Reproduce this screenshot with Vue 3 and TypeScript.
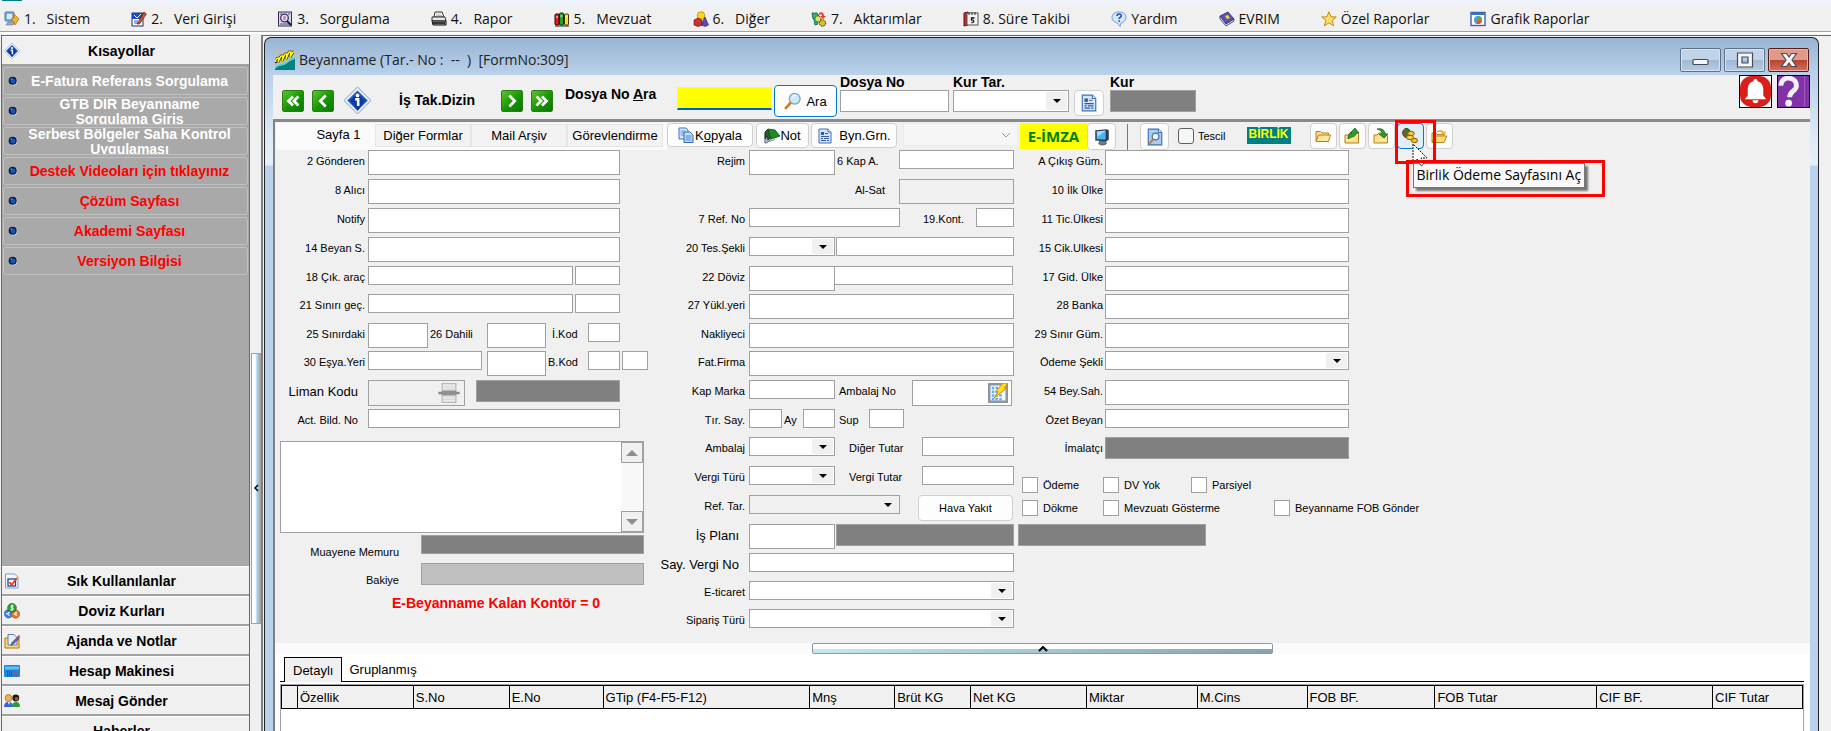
<script setup lang="ts">
import { ref } from 'vue'

interface Cell {
  kind: 'input' | 'select' | 'text' | 'filled' | 'button' | 'lookup' | 'stamp'
  w: number
  gap?: number
  tall?: boolean
  off?: boolean
  text?: string
  name?: string
}
interface Row {
  id: string
  label: string
  large?: boolean
  inset?: boolean
  short?: boolean
  cells: Cell[]
}

const icons: Record<string, string> = {
  system: '<rect x="1" y="1" width="9" height="9" rx="1" fill="#7fb2e6" stroke="#4b76a8"/><rect x="3" y="3" width="5" height="5" fill="#d8ecff"/><path d="M2 14h7l2-3H4z" fill="#9fb0c6" stroke="#5d6f88" stroke-width=".6"/><path d="M10 3l5 5-4 6-1-3-3-3 3-1z" fill="#f6b12c" stroke="#a86a08" stroke-width=".7"/>',
  entry: '<rect x="1" y="2" width="11" height="13" fill="#fff" stroke="#1d2b6b"/><path d="M1 2h11v6H1z" fill="#1f49b6"/><path d="M3 4l3 3 4-4" stroke="#fff" fill="none"/><path d="M3 10h4M3 12h6" stroke="#3b60c8"/><path d="M6 13l7-12 2.500 2-7 10z" fill="#d2502c" stroke="#40160c" stroke-width=".6"/>',
  query: '<rect x="1.500" y="1" width="13" height="14" fill="#d5d5e8" stroke="#30304f"/><path d="M3 13h10M3 3h2M11 3h2" stroke="#505070"/><circle cx="7.500" cy="7" r="3.800" fill="#f3dcf5" stroke="#3f2d68" stroke-width="1.300"/><path d="M6 6h3M6 8h3" stroke="#7d5ba0"/><path d="M10 10l4 4" stroke="#201838" stroke-width="2"/>',
  printer: '<path d="M4 1h7l2 5H3z" fill="#fff" stroke="#333"/><path d="M1 6h13l1 4H1z" fill="#e8e8e8" stroke="#333"/><path d="M1 10h14v4H2z" fill="#a7a7a7" stroke="#111"/><path d="M2 12h12" stroke="#111" stroke-width="1.500"/><path d="M5 3h5M5 4.500h6" stroke="#999" stroke-width=".6"/>',
  books: '<rect x="1" y="3" width="4" height="11" rx="1" fill="#e81e1e" stroke="#300"/><rect x="5.500" y="2" width="4" height="12" rx="1" fill="#17a335" stroke="#031"/><rect x="10.500" y="3" width="4" height="11" rx="1" fill="#ffd928" stroke="#430"/><path d="M2 6h2M6.500 5h2M11.500 6h2" stroke="#fff"/><path d="M1 15h14" stroke="#222"/>',
  shapes: '<circle cx="8" cy="4.500" r="3.800" fill="#ffd51c" stroke="#9a7400" stroke-width=".6"/><path d="M1 9l4-2 4 2v5l-4 1.500L1 14z" fill="#cf3030" stroke="#5d0b0b" stroke-width=".6"/><path d="M12 6l3.500 8-3 1.500L8 14z" fill="#5c4bb8" stroke="#221866" stroke-width=".6"/>',
  transfer: '<path d="M1 2h5l2 3-3 3H2z" fill="#2eb082" stroke="#0b4a33" stroke-width=".7"/><path d="M8 2c3-2 5 0 5 3h2l-3 3-3-3h2c0-2-1-2-3-1z" fill="#ef3d22"/><circle cx="7" cy="8" r="3" fill="#efe24e" stroke="#333" stroke-dasharray="1.500 1"/><circle cx="11.500" cy="12" r="3.200" fill="#d5c12c" stroke="#222" stroke-dasharray="1.500 1"/><path d="M3 8l1 6 3-1-1-3" stroke="#1b7d48" fill="#2eb082"/>',
  calendar: '<path d="M1 2l4-1v13l-4 1z" fill="#c62d2d" stroke="#5a1111"/><rect x="4" y="2" width="11" height="12" fill="#f3f3f3" stroke="#555"/><path d="M6 1v3M9 1v3M12 1v3" stroke="#333"/><path d="M11.500 7H8.500v2c3-.5 3 3 0 2.500" fill="none" stroke="#111" stroke-width="1.300"/>',
  help: '<path d="M8 1c4 0 7 2 7 5.500 0 3-2.500 5-5 5.500L9 15.500 6.500 12C3.500 11.500 1 9.500 1 6.500 1 3 4 1 8 1z" fill="#d5e6fb" stroke="#7d9cc4"/><path d="M6 5c0-3 4.500-2.500 4.300 0-.2 1.500-2.100 1.500-2.100 3M8.200 9.200v1.500" fill="none" stroke="#1b4db0" stroke-width="1.600"/>',
  book: '<path d="M1 5l8-4 6 7-8 5z" fill="#5a52b5" stroke="#26215f" stroke-width=".8"/><path d="M1 5v3l6 7 8-5V8l-8 5z" fill="#e9e9f5" stroke="#26215f" stroke-width=".8"/><path d="M6 5l3-1 2 3-3 1z" fill="#ffd23c"/>',
  star: '<path d="M8 .8l2 5 5.300.2-4.200 3.400 1.500 5.400L8 11.800l-4.600 3 1.500-5.400L.7 6 6 5.800z" fill="#ffe065" stroke="#c08a10"/>',
  chart: '<rect x="1" y="1.500" width="14" height="13" fill="#fff" stroke="#3b62ad" stroke-width="1.400"/><path d="M1 2h14v2H1z" fill="#3f71c9"/><circle cx="8" cy="9" r="4" fill="#4f9be0"/><path d="M8 9V5a4 4 0 0 1 4 4z" fill="#59b042"/><path d="M8 9h4a4 4 0 0 1-6 3.400z" fill="#ea5424"/>',
  info: '<path d="M8 0l8 8-8 8-8-8z" fill="#e7eefb" stroke="#9eb1d6" stroke-width=".6"/><path d="M8 2l6 6-6 6-6-6z" fill="#1a55c8"/><path d="M8 4l4.500 4L8 14 3.500 8z" fill="#0b3aa0"/><circle cx="8" cy="5" r="1.100" fill="#fff"/><path d="M6.600 7.300h1.800v4" fill="none" stroke="#fff" stroke-width="1.500"/>',
  orb: '<circle cx="8.500" cy="8.500" r="6.500" fill="#e4e4d8"/><circle cx="7.500" cy="7.500" r="6.500" fill="#0b1d4f"/><circle cx="8" cy="8" r="4" fill="#1256bd"/><circle cx="5.500" cy="5" r="1.500" fill="#5f87c9"/>',
  check: '<path d="M1.500 1h9l3.500 3v11h-12.500z" fill="#f4f9ff" stroke="#7a9cc9"/><rect x="4" y="6" width="7.500" height="7" fill="#fff" stroke="#1746a3" stroke-width="1.300"/><path d="M5.500 9l2 3L13 5" fill="none" stroke="#f03a1e" stroke-width="1.900"/>',
  money: '<circle cx="4.500" cy="10.800" r="4.200" fill="#3a84dc" stroke="#1c5cab" stroke-width=".6"/><circle cx="11.500" cy="11" r="4.200" fill="#e9782d" stroke="#a84b10" stroke-width=".6"/><circle cx="8" cy="4.800" r="4.400" fill="#2c9d33" stroke="#14611a" stroke-width=".6"/><path d="M9.800 3C7 1.800 6 4.500 8 4.800c2.500.3 1.500 3-1.700 1.900M8 1.600v6.300M6 9.500c-3-1-3 3.500 0 2.500M2 10.800h3M13 9.500c-3-1-3 3 0 3M10 11h3" fill="none" stroke="#fff" stroke-width="1"/>',
  agenda: '<path d="M1 5h4l1 1h9v9H1z" fill="#ffd975" stroke="#a97712"/><path d="M4 1.500h6l3 3V12H4z" fill="#e6f0fc" stroke="#5d7fb0"/><path d="M7 12.500l1-3 6-6 1.500 1.500-6 6z" fill="#5d6ca8" stroke="#2f3868" stroke-width=".6"/><path d="M13.500 3.500L15 2l1 1-1 2z" fill="#e23a1d"/>',
  calc: '<rect x="0" y="2" width="16" height="12" rx="1" fill="#1d86db"/><path d="M1 3.500h14v3H1z" fill="#64bdf5"/><path d="M3 9h6M3 11h6M3 12.800h6" stroke="#0a3d78" stroke-dasharray="1 1"/><path d="M10 9h4M10 11h4M10 12.800h4" stroke="#c43a4a" stroke-dasharray="1 1"/>',
  users: '<circle cx="4.500" cy="5" r="3.400" fill="#f2ad57" stroke="#a06619" stroke-width=".7"/><circle cx="11.800" cy="5" r="3.400" fill="#26140e"/><circle cx="12.500" cy="5.800" r="1.900" fill="#a35a2d"/><path d="M0 14c0-7 9-7 9 0z" fill="#3462dc"/><path d="M8 12.500c1-5 8-4.500 8 .5l-.5 1H9z" fill="#2c9a38"/><path d="M4 9l1 3 1-3z" fill="#fff"/>',
  magnifier: '<circle cx="9.500" cy="6" r="4.800" fill="#cbe8fb" stroke="#8ba4bb" stroke-width="1.200"/><path d="M7 5c1-2 3-2 4-1.500" stroke="#fff" fill="none"/><path d="M6 9.500l-5 5.500" stroke="#d9751d" stroke-width="2.400"/>',
  doc: '<path d="M2 1h9l3 3v11H2z" fill="#d4e6fa" stroke="#3f6fb4"/><path d="M11 1v3h3" fill="#fff" stroke="#3f6fb4"/><rect x="4" y="4" width="3" height="3" fill="#35589b"/><path d="M8 5.500h3M4 8.500h8M4 10.500h2M7 10.500h5M4 12.500h5M10 12.500h2" stroke="#35589b"/>',
  copy: '<path d="M1 1h7l2 2v9H1z" fill="#dbeafb" stroke="#3a71bd"/><path d="M2.500 4h5M2.500 6h5M2.500 8h5" stroke="#5d90d4"/><path d="M6 5h6l3 3v7.500H6z" fill="#c5defa" stroke="#2f66b5"/><path d="M7.500 9h6M7.500 11h6M7.500 13h6" stroke="#4f86d0"/>',
  note: '<path d="M1 5l3-3 3 9-4 4H.8z" fill="#9db3c9" stroke="#4d637b" stroke-width=".7"/><path d="M1 4l3-3 3 8-3 3-1-4-2 3z" fill="#2f5633" stroke="#0b3010" stroke-width=".8"/><path d="M4 1l7 1 5 6-9 3z" fill="#1a8f26" stroke="#064b10" stroke-width=".8"/><path d="M5 13.500l6-2" stroke="#77859a"/>',
  monitor: '<path d="M2 2l10-1 2 1v8l-2 2-10-1z" fill="#2f3b49"/><path d="M3.300 3l8-.8v8L3.300 10z" fill="#43b4f5"/><path d="M3.300 3l8-.8L4 8z" fill="#9ddbff"/><path d="M6 11.500h5l1 2.500c-2 1.600-5 1.600-7 0z" fill="#707c88" stroke="#414b55" stroke-width=".6"/>',
  preview: '<path d="M2 1h9l3 3v11H2z" fill="#a9cdf5" stroke="#3f6fb4"/><path d="M11 1v3h3" fill="#fff" stroke="#3f6fb4"/><circle cx="8.500" cy="7.500" r="3" fill="#eaf5ff" stroke="#51749f" stroke-width="1.100"/><path d="M6.500 10L3 14" stroke="#cf7b30" stroke-width="1.800"/>',
  folder: '<path d="M1 13V3.500h4.500L7 5h6.500v2" fill="#fbe08b" stroke="#b5811e"/><path d="M1 13.500L3.500 7H15.500l-2 6.500z" fill="#ffe79a" stroke="#b5811e"/>',
  folderUp: '<path d="M1 15V7h3l2-2h8.500v10z" fill="#ffdf83" stroke="#b5811e"/><path d="M4 11c0-5 2-6 4-6H6l5-5 4 5h-3c0 4-3 3-8 6z" fill="#2f9a2f" stroke="#14611a" stroke-width=".7"/><path d="M2 12h12" stroke="#fff2bf"/>',
  folderDown: '<path d="M1 15V7h3l2-2h6l2.500 3v7z" fill="#ffdf83" stroke="#b5811e"/><path d="M4 1c5-1 8 1 8 5h3l-4 4-5-4h3c0-2-1-4-5-5z" fill="#2f9a2f" stroke="#14611a" stroke-width=".7"/><path d="M2 12h12" stroke="#fff2bf"/>',
  coins: '<ellipse cx="4.500" cy="5" rx="3.800" ry="4.500" fill="#2d7d31" stroke="#123e15"/><path d="M3.500 1.500c-3 1-3 5 0 7" stroke="#c83421" stroke-width="1.600" fill="none"/><ellipse cx="9" cy="5.500" rx="3.300" ry="2.200" fill="#f5c535" stroke="#8c5c09"/><ellipse cx="8" cy="9.500" rx="3.600" ry="2.200" fill="#f9d04c" stroke="#8c5c09"/><ellipse cx="12.500" cy="12.500" rx="3.200" ry="2.200" fill="#f2b92b" stroke="#8c5c09"/>',
  folderOpen: '<path d="M1 14V5h4l1 1.500h7V9" fill="#fbe08b" stroke="#b5811e"/><path d="M1 14.500L4 8h12l-3 6.500z" fill="#ffdd7a" stroke="#b5811e"/><path d="M6 3c3-2 6-1 7 1l2-1-1 4-4-1 1-1c-1-1.500-3-1.500-5-.5z" fill="#f0a93a"/>',
  logo: '<rect width="20" height="20" fill="#b9bdbd"/><path d="M0 19c4-4 6-3 9-4s6-5 11-6v11H0z" fill="#008080"/><path d="M0 18c4-4 6-3 9-4s6-5 11-6" fill="none" stroke="#00e5e5"/><path d="M1 13c-1-4 1-5 3-5l-1 4 3-6h2l-1 5 3-7h2l-1 5 3-7h2l-1 5 3-5h1" fill="none" stroke="#111" stroke-width="2.600"/><path d="M1 12c-1-3 1-4 3-4l-1 4 3-6h2l-1 5 3-7h2l-1 5 3-7h2l-1 5 3-5h1" fill="none" stroke="#ff0" stroke-width="1.500"/>',
  table: '<rect x="0" y="0" width="16" height="16" fill="#8c979c"/><rect x="2" y="2" width="12" height="12" fill="#f4faff"/><path d="M3 4h9M3 7h9M3 10h9M3 13h8" stroke="#5eaef5" stroke-width="2" stroke-dasharray="2 1"/><path d="M12 0h4l-3 4h2L5 12l3-5H6z" fill="#ffe014" stroke="#d8821a" stroke-width=".8"/>',
  stamp: '<path d="M4 .5h11v15H4z" fill="#ececec" stroke="#b8b8b8"/><path d="M5 3h9M5 5h9M5 11h9M5 13h9" stroke="#d8d8d8"/><path d="M1 8h17" stroke="#888" stroke-width="2"/><path d="M4 8h11" stroke="#8f8f8f" stroke-width="4"/>',
}

const menu = [
  ['system', '1.   Sistem'], ['entry', '2.   Veri Girişi'], ['query', '3.   Sorgulama'], ['printer', '4.   Rapor'],
  ['books', '5.   Mevzuat'], ['shapes', '6.   Diğer'], ['transfer', '7.   Aktarımlar'], ['calendar', '8. Süre Takibi'],
  ['help', 'Yardım'], ['book', 'EVRIM'], ['star', 'Özel Raporlar'], ['chart', 'Grafik Raporlar'],
]

const shortcuts = [
  { text: 'E-Fatura Referans Sorgulama' },
  { text: 'GTB DIR Beyanname\nSorgulama Giriş' },
  { text: 'Serbest Bölgeler Saha Kontrol\nUygulaması' },
  { text: 'Destek Videoları için tıklayınız', hot: true },
  { text: 'Çözüm Sayfası', hot: true },
  { text: 'Akademi Sayfası', hot: true },
  { text: 'Versiyon Bilgisi', hot: true },
]

const groups = [
  ['check', 'Sık Kullanılanlar'], ['money', 'Doviz Kurları'], ['agenda', 'Ajanda ve Notlar'],
  ['calc', 'Hesap Makinesi'], ['users', 'Mesaj Gönder'], ['', 'Haberler'],
]

const full = (w: number, tall = true): Cell[] => [{ kind: 'input', w, tall }]

const left: Row[] = [
  { id: 'gonderen', label: '2 Gönderen', cells: full(252) },
  { id: 'alici', label: '8 Alıcı', cells: full(252) },
  { id: 'notify', label: 'Notify', cells: full(252) },
  { id: 'beyan', label: '14 Beyan S.', cells: full(252) },
  { id: 'cikarac', label: '18 Çık. araç', short: true, cells: [{ kind: 'input', w: 205 }, { kind: 'input', w: 45, gap: 2, name: 'Çıkış araç ülke' }] },
  { id: 'sinir', label: '21 Sınırı geç.', cells: [{ kind: 'input', w: 205 }, { kind: 'input', w: 45, gap: 2, name: 'Sınır ülke' }] },
  { id: 'sinirdaki', label: '25 Sınırdaki', short: true, cells: [
    { kind: 'input', w: 60, tall: true }, { kind: 'text', w: 59, text: '26 Dahili' }, { kind: 'input', w: 59, tall: true, name: '26 Dahili' },
    { kind: 'text', w: 38, gap: 4, text: 'İ.Kod' }, { kind: 'input', w: 32, name: 'İ.Kod' }] },
  { id: 'esya', label: '30 Eşya.Yeri', cells: [
    { kind: 'input', w: 114 }, { kind: 'input', w: 59, gap: 5, tall: true, name: 'Eşya yeri kodu' },
    { kind: 'text', w: 42, text: 'B.Kod' }, { kind: 'input', w: 32, name: 'B.Kod' }, { kind: 'input', w: 26, gap: 2, name: 'B.Kod ek' }] },
  { id: 'liman', label: 'Liman Kodu', large: true, inset: true, cells: [{ kind: 'stamp', w: 97 }, { kind: 'filled', w: 144, gap: 11, name: 'Liman adı' }] },
  { id: 'act', label: 'Act. Bild. No', inset: true, cells: full(252, false) },
]

const middle: Row[] = [
  { id: 'rejim', label: 'Rejim', cells: [{ kind: 'input', w: 86, tall: true }, { kind: 'text', w: 64, text: '6 Kap A.' }, { kind: 'input', w: 115, name: '6 Kap A.' }] },
  { id: 'alsat', label: '', cells: [{ kind: 'text', w: 46, gap: 104, text: 'Al-Sat' }, { kind: 'input', w: 115, tall: true, off: true, name: 'Al-Sat' }] },
  { id: 'refno', label: '7 Ref. No', cells: [{ kind: 'input', w: 151 }, { kind: 'text', w: 55, gap: 21, text: '19.Kont.' }, { kind: 'input', w: 38, name: '19.Kont.' }] },
  { id: 'teslim', label: '20 Tes.Şekli', cells: [{ kind: 'select', w: 86 }, { kind: 'input', w: 178, gap: 1, name: 'Teslim yeri' }] },
  { id: 'doviz', label: '22 Döviz', short: true, cells: [{ kind: 'input', w: 86, tall: true }, { kind: 'input', w: 179, gap: -1, name: 'Döviz tutarı' }] },
  { id: 'yukl', label: '27 Yükl.yeri', cells: full(265) },
  { id: 'nakliyeci', label: 'Nakliyeci', short: true, cells: full(265) },
  { id: 'fatfirma', label: 'Fat.Firma', cells: full(265) },
  { id: 'kap', label: 'Kap Marka', cells: [{ kind: 'input', w: 86 }, { kind: 'text', w: 75, gap: 2, text: 'Ambalaj No' }, { kind: 'lookup', w: 100, name: 'Ambalaj No' }] },
  { id: 'tir', label: 'Tır. Say.', short: true, cells: [
    { kind: 'input', w: 33 }, { kind: 'text', w: 21, text: 'Ay' }, { kind: 'input', w: 32, name: 'Ay' },
    { kind: 'text', w: 32, gap: 2, text: 'Sup' }, { kind: 'input', w: 35, name: 'Sup' }] },
  { id: 'ambalaj', label: 'Ambalaj', cells: [{ kind: 'select', w: 86 }, { kind: 'text', w: 75, gap: 12, text: 'Diğer Tutar' }, { kind: 'input', w: 92, name: 'Diğer Tutar' }] },
  { id: 'vergi', label: 'Vergi Türü', cells: [{ kind: 'select', w: 86 }, { kind: 'text', w: 75, gap: 12, text: 'Vergi Tutar' }, { kind: 'input', w: 92, name: 'Vergi Tutar' }] },
  { id: 'reftar', label: 'Ref. Tar.', cells: [{ kind: 'select', w: 151, off: true }, { kind: 'button', w: 95, gap: 18, text: 'Hava Yakıt' }] },
  { id: 'isplani', label: 'İş Planı', large: true, inset: true, cells: [{ kind: 'input', w: 86, tall: true }, { kind: 'filled', w: 178, gap: 1, name: 'İş planı adı' }] },
  { id: 'sayvergi', label: 'Say. Vergi No', large: true, inset: true, short: true, cells: full(265, false) },
  { id: 'eticaret', label: 'E-ticaret', short: true, cells: [{ kind: 'select', w: 265 }] },
  { id: 'siparis', label: 'Sipariş Türü', cells: [{ kind: 'select', w: 265 }] },
]

const right: Row[] = [
  { id: 'cikisgum', label: 'A Çıkış Güm.', cells: full(244) },
  { id: 'ilkulke', label: '10 İlk Ülke', cells: full(244) },
  { id: 'ticulke', label: '11 Tic.Ülkesi', cells: full(244) },
  { id: 'cikulke', label: '15 Cik.Ulkesi', cells: full(244) },
  { id: 'gidulke', label: '17 Gid. Ülke', short: true, cells: full(244) },
  { id: 'banka', label: '28 Banka', cells: full(244) },
  { id: 'sinirgum', label: '29 Sınır Güm.', short: true, cells: full(244) },
  { id: 'odemesekli', label: 'Ödeme Şekli', cells: [{ kind: 'select', w: 244 }] },
  { id: 'beysah', label: '54 Bey.Sah.', cells: full(244) },
  { id: 'ozet', label: 'Özet Beyan', short: true, cells: full(244, false) },
  { id: 'imalatci', label: 'İmalatçı', cells: [{ kind: 'filled', w: 244 }] },
]

const columns = [
  { key: 'left', rows: left },
  { key: 'middle', rows: middle },
  { key: 'right', rows: right },
]

const flags = ['Ödeme', 'DV Yok', 'Parsiyel', 'Dökme', 'Mevzuatı Gösterme', 'Beyanname FOB Gönder']

const grid: [string, number][] = [
  ['', 16], ['Özellik', 116], ['S.No', 96], ['E.No', 94], ['GTip (F4-F5-F12)', 207], ['Mnş', 85], ['Brüt KG', 76], ['Net KG', 116],
  ['Miktar', 111], ['M.Cins', 110], ['FOB BF.', 128], ['FOB Tutar', 162], ['CIF BF.', 116], ['CIF Tutar', 90],
]
const gridTotal = grid.reduce((sum, c) => sum + c[1], 0)

const search = ref('')
const px = (c: Cell) => ({ width: c.w + 'px', marginLeft: (c.gap ?? 0) + 'px' })
</script>

<template>
  <div class="app">
    <div class="strip"><span class="strip-mark"></span></div>
    <nav class="menubar">
      <button v-for="m in menu" :key="m[1]" type="button" class="menu-item">
        <svg class="ic" viewBox="0 0 16 16" v-html="icons[m[0]]"></svg><span>{{ m[1] }}</span>
      </button>
    </nav>

    <div class="body">
      <aside class="sidebar">
        <button type="button" class="group first">
          <svg class="ic" viewBox="0 0 16 16" v-html="icons.info"></svg><span>Kısayollar</span>
        </button>
        <div class="shortcuts">
          <button v-for="s in shortcuts" :key="s.text" type="button" class="shortcut" :class="{ hot: s.hot }">
            <svg class="orb" viewBox="0 0 16 16" v-html="icons.orb"></svg><span>{{ s.text }}</span>
          </button>
        </div>
        <div class="groups">
          <button v-for="g in groups" :key="g[1]" type="button" class="group">
            <svg class="ic" viewBox="0 0 16 16" v-html="icons[g[0]] ?? ''"></svg><span>{{ g[1] }}</span>
          </button>
        </div>
      </aside>
      <div class="divider"><button type="button" class="divider-grip" aria-label="Paneli daralt">
        <svg viewBox="0 0 6 8"><path d="M5 1L2 4l3 3" fill="none" stroke="#000" stroke-width="1.500" /></svg>
      </button></div>

      <main class="workspace">
        <section class="window">
          <header class="titlebar">
            <svg class="logo" viewBox="0 0 20 20" v-html="icons.logo"></svg>
            <h1>Beyanname (Tar.- No :&nbsp; --&nbsp; )&nbsp; [FormNo:309]</h1>
            <div class="winbtns">
              <button type="button" aria-label="Küçült"><svg viewBox="0 0 20 16"><rect x="2" y="7.500" width="15" height="5" rx="1" fill="#f5f7fa" stroke="#454b59" stroke-width="1.200" /></svg></button>
              <button type="button" aria-label="Ekranı kapla"><svg viewBox="0 0 20 16"><path d="M2.500 1h15v14h-15zM7 5v6h6V5z" fill="#f5f7fa" fill-rule="evenodd" stroke="#454b59" stroke-width="1.200" /></svg></button>
              <button type="button" class="close" aria-label="Kapat"><svg viewBox="0 0 20 16"><path d="M2.500 1.500h5L10 5l2.500-3.500h5L13 8l4.500 6.500h-5L10 11l-2.500 3.500h-5L7 8z" fill="#f5f7fa" stroke="#564a54" stroke-width="1.200" /></svg></button>
            </div>
          </header>

          <div class="client">
            <div class="toolbar">
              <button type="button" class="nav" aria-label="İlk"><svg viewBox="0 0 22 22"><path d="M11 6l-5 5 5 5M17 6l-5 5 5 5" /></svg></button>
              <button type="button" class="nav" aria-label="Önceki"><svg viewBox="0 0 22 22"><path d="M14 5l-6 6 6 6" /></svg></button>
              <button type="button" class="plain" aria-label="Bilgi"><svg viewBox="0 0 16 16" v-html="icons.info"></svg></button>
              <span class="caption index">İş Tak.Dizin</span>
              <button type="button" class="nav" aria-label="Sonraki"><svg viewBox="0 0 22 22"><path d="M8 5l6 6-6 6" /></svg></button>
              <button type="button" class="nav" aria-label="Son"><svg viewBox="0 0 22 22"><path d="M5 6l5 5-5 5M11 6l5 5-5 5" /></svg></button>
              <label class="caption find" for="ara">Dosya No <u>A</u>ra</label>
              <input id="ara" v-model="search" class="search" autofocus />
              <button type="button" class="soft go"><svg class="mid" viewBox="0 0 16 16" v-html="icons.magnifier"></svg>Ara</button>
              <div class="stack no">
                <label class="caption" for="dosya">Dosya No</label>
                <input id="dosya" class="box" />
              </div>
              <div class="stack rate">
                <label class="caption" for="kurtar">Kur Tar.</label>
                <span class="combo"><select id="kurtar"><option></option></select><i></i></span>
              </div>
              <button type="button" class="soft square" aria-label="Kur belgesi"><svg class="mid" viewBox="0 0 16 16" v-html="icons.doc"></svg></button>
              <div class="stack kur">
                <label class="caption" for="kur">Kur</label>
                <input id="kur" class="box filled" readonly />
              </div>
              <div class="corner">
                <button type="button" class="bell" aria-label="Bildirimler"><svg viewBox="0 0 32 32"><rect width="32" height="32" fill="#fff" /><rect width="32" height="32" rx="12" fill="#da1f1b" /><path d="M16 3c2 0 2 1.500 2 2.500 4 1 6 4 6 8.500v6l3 4H5l3-4v-6c0-4.500 2-7.500 6-8.500C14 4.500 14 3 16 3zM13 25h6c0 4-6 4-6 0z" fill="#fff" /></svg></button>
                <button type="button" class="ask" aria-label="Yardım"><svg viewBox="0 0 32 32"><rect width="32" height="32" fill="#8331a7" /><rect x="27" width="1" height="32" fill="#a05fc0" /><path d="M3 10c0-11 16-10 16 0 0 6-7 5-7 12" fill="none" stroke="#f4f0f8" stroke-width="5" /><circle cx="11" cy="28" r="3.500" fill="#f4f0f8" /></svg></button>
              </div>
            </div>

            <div class="page">
              <div class="tabrow">
                <div class="tabs" role="tablist">
                  <button type="button" role="tab" class="tab on" aria-selected="true">Sayfa 1</button>
                  <button type="button" role="tab" class="tab">Diğer Formlar</button>
                  <button type="button" role="tab" class="tab">Mail Arşiv</button>
                  <button type="button" role="tab" class="tab">Görevlendirme</button>
                </div>
                <button type="button" class="soft copy"><svg class="ic" viewBox="0 0 16 16" v-html="icons.copy"></svg><span>K<u>o</u>pyala</span></button>
                <button type="button" class="soft note"><svg class="ic" viewBox="0 0 16 16" v-html="icons.note"></svg>Not</button>
                <button type="button" class="soft grn"><svg class="ic" viewBox="0 0 16 16" v-html="icons.doc"></svg>Byn.Grn.</button>
                <span class="combo ghost"><select aria-label="Seçenek" disabled><option></option></select><svg viewBox="0 0 10 6"><path d="M1 1l4 4 4-4" fill="none" stroke="#9a9a9a" /></svg></span>
                <button type="button" class="sign">E-İMZA</button>
                <button type="button" class="soft screen" aria-label="Ekran"><svg class="mid" viewBox="0 0 16 16" v-html="icons.monitor"></svg></button>
                <span class="bar"></span>
                <button type="button" class="soft screen" aria-label="Önizleme"><svg class="mid" viewBox="0 0 16 16" v-html="icons.preview"></svg></button>
                <label class="tescil"><input type="checkbox" />Tescil</label>
                <strong class="birlik">BİRLİK</strong>
                <div class="files">
                  <button type="button" class="soft" aria-label="Klasör"><svg class="ic" viewBox="0 0 16 16" v-html="icons.folder"></svg></button>
                  <button type="button" class="soft" aria-label="Dışarı aktar"><svg class="ic" viewBox="0 0 16 16" v-html="icons.folderUp"></svg></button>
                  <button type="button" class="soft" aria-label="İçeri al"><svg class="ic" viewBox="0 0 16 16" v-html="icons.folderDown"></svg></button>
                  <div class="pay">
                    <button type="button" class="soft active" aria-describedby="pay-tip"><svg class="ic" viewBox="0 0 16 16" v-html="icons.coins"></svg></button>
                    <span class="mark mark-button"></span>
                    <span id="pay-tip" class="tip" role="tooltip">Birlik Ödeme Sayfasını Aç</span>
                    <svg class="cursor" viewBox="0 0 16 24"><path d="M1 1v19l4-4 4 7 3-2-3-6h6z" fill="#fff" stroke="#111" stroke-dasharray="2 1" /></svg>
                    <span class="mark mark-tip"></span>
                  </div>
                  <button type="button" class="soft" aria-label="Klasör aç"><svg class="ic" viewBox="0 0 16 16" v-html="icons.folderOpen"></svg></button>
                </div>
              </div>

              <form class="form" @submit.prevent>
                <div v-for="col in columns" :key="col.key" class="col" :class="col.key">
                  <div v-for="r in col.rows" :key="r.id" class="row" :class="{ short: r.short }">
                    <label class="lbl" :class="{ large: r.large, inset: r.inset }" :for="r.id + '0'">{{ r.label }}</label>
                    <template v-for="(c, i) in r.cells" :key="i">
                      <label v-if="c.kind === 'text'" class="sub" :style="px(c)" :for="r.id + (i + 1)">{{ c.text }}</label>
                      <span v-else-if="c.kind === 'select'" class="combo" :class="{ off: c.off }" :style="px(c)"><select :id="r.id + i"><option></option></select><i></i></span>
                      <button v-else-if="c.kind === 'button'" type="button" class="soft small" :style="px(c)">{{ c.text }}</button>
                      <span v-else-if="c.kind === 'lookup'" class="lookup" :style="px(c)">
                        <input :id="r.id + i" /><button type="button" aria-label="Ambalaj listesi"><svg viewBox="0 0 16 16" v-html="icons.table"></svg></button>
                      </span>
                      <span v-else-if="c.kind === 'stamp'" class="lookup off" :style="px(c)">
                        <input :id="r.id + i" disabled /><button type="button" aria-label="Liman listesi"><svg viewBox="0 0 19 16" v-html="icons.stamp"></svg></button>
                      </span>
                      <input v-else :id="r.id + i" class="box" :class="{ tall: c.tall, off: c.off, filled: c.kind === 'filled' }" :style="px(c)" :aria-label="c.name" :readonly="c.kind === 'filled'" />
                    </template>
                  </div>

                  <template v-if="col.key === 'left'">
                    <div class="memo">
                      <textarea aria-label="Açıklama"></textarea>
                      <div class="scroll">
                        <button type="button" aria-label="Yukarı"><svg viewBox="0 0 12 6"><path d="M0 6l6-6 6 6z" fill="#8e8e8e" /></svg></button>
                        <button type="button" aria-label="Aşağı"><svg viewBox="0 0 12 6"><path d="M0 0h12L6 6z" fill="#8e8e8e" /></svg></button>
                      </div>
                    </div>
                    <div class="row info"><label class="lbl" for="memur">Muayene Memuru</label><input id="memur" class="box filled wide" readonly /></div>
                    <div class="row info"><label class="lbl" for="bakiye">Bakiye</label><input id="bakiye" class="box silver wide" readonly /></div>
                    <p class="credit">E-Beyanname Kalan Kontör = 0</p>
                  </template>

                  <template v-if="col.key === 'right'">
                    <div class="flags">
                      <label v-for="f in flags" :key="f"><input type="checkbox" />{{ f }}</label>
                    </div>
                    <input class="box filled extra" aria-label="Ek bilgi" readonly />
                  </template>
                </div>
              </form>

              <div class="hsplit"><button type="button" aria-label="Alt paneli aç">
                <svg viewBox="0 0 10 6"><path d="M1 5l4-4 4 4" fill="none" stroke="#000" stroke-width="2" /></svg>
              </button></div>

              <div class="detail">
                <div class="dtabs" role="tablist">
                  <button type="button" role="tab" class="dtab on" aria-selected="true">Detaylı</button>
                  <button type="button" role="tab" class="dtab">Gruplanmış</button>
                </div>
                <div class="sheet">
                  <table>
                    <colgroup><col v-for="c in grid" :key="c[0]" :style="{ width: (c[1] / gridTotal) * 100 + '%' }" /></colgroup>
                    <thead><tr><th v-for="c in grid" :key="c[0]" scope="col">{{ c[0] }}</th></tr></thead>
                  </table>
                </div>
              </div>
            </div>
          </div>
        </section>
      </main>
    </div>
  </div>
</template>

<style>
html, body { height: 100%; }
body { margin: 0; overflow: hidden; background: #f0f0f0; }
</style>

<style scoped>
* { box-sizing: border-box; }
button, input, select, textarea { font: inherit; color: inherit; margin: 0; padding: 0; border-radius: 0; outline: none; }
button { background: none; border: 0; cursor: default; }
svg { display: block; flex: none; }

.app { display: flex; flex-direction: column; height: 100vh; overflow: hidden; background: #f0f0f0; color: #000; font-family: "Liberation Sans", Arial, sans-serif; font-size: 13px; }
.ic { width: 16px; height: 16px; }
.mid { width: 18px; height: 18px; }

.strip { flex: none; height: 6px; background: #eef2fb; }
.strip-mark { display: block; width: 20px; height: 1px; margin-left: 2px; background: #008080; }
.menubar { flex: none; display: flex; gap: 41px; height: 26px; padding-left: 4px; border-bottom: 1px solid #a0a0a0; }
.menu-item { display: flex; align-items: center; gap: 4px; flex: none; font-family: "Open Sans", "Segoe UI", sans-serif; font-size: 14px; white-space: pre; color: #111; }

.body { flex: 1; min-height: 0; display: flex; padding-top: 3px; background: linear-gradient(#fff 2px, #f0f0f0 2px); }

.sidebar { flex: none; width: 249px; margin-left: 1px; display: flex; flex-direction: column; border: 1px solid #696969; border-bottom: 0; background: #a9a9a9; font-weight: bold; font-size: 14px; }
.group { flex: none; display: flex; align-items: center; width: 100%; height: 30px; padding: 0 26px 0 2px; background: #f0f0f0; border-top: 1px solid #fff; border-bottom: 2px solid #a0a0a0; }
.group span { flex: 1; text-align: center; }
.shortcuts { flex: 1; min-height: 0; display: flex; flex-direction: column; gap: 2px; padding: 1px; }
.shortcut { flex: none; display: flex; align-items: center; height: 28px; padding: 0 6px 0 4px; border: 1px solid #c0c0c0; border-radius: 3px; overflow: hidden; color: #fff; line-height: 15px; }
.shortcut.hot { color: #f00; }
.shortcut span { flex: 1; text-align: center; max-height: 28px; white-space: pre-line; }
.orb { width: 10px; height: 10px; }
.groups { flex: none; height: 166px; overflow: hidden; border-top: 1px solid #a0a0a0; }

.divider { flex: none; width: 13px; display: flex; flex-direction: column; justify-content: center; padding-left: 1px; border-right: 2px solid #808080; }
.divider-grip { display: flex; align-items: center; justify-content: center; width: 10px; height: 271px; margin-bottom: -210px; border: 1px solid #a0a0a0; background: linear-gradient(90deg, #fff 40%, #b5d6ea 60%, #90b0c4); }
.divider-grip svg { width: 6px; height: 8px; }

.workspace { flex: 1; min-width: 0; display: flex; padding: 1px 12px 0 1px; border-top: 1px solid #696969; }
.window { flex: 1; min-width: 0; display: flex; flex-direction: column; border: 1px solid #222; border-bottom: 0; border-radius: 7px 7px 0 0; background: linear-gradient(#9ab4d2, #b9d1ea 37px, #dfeaf7 100px, #e6eff9 127px, #b9d1ea 128px); }
.titlebar { flex: none; display: flex; align-items: center; height: 37px; padding: 0 9px 0 10px; }
.logo { width: 20px; height: 20px; margin-top: 6px; }
h1 { flex: 1; margin: 6px 0 0 4px; font: 14px/20px "Open Sans", "Segoe UI", sans-serif; color: #222; }
.winbtns { display: flex; gap: 3px; }
.winbtns button { display: flex; align-items: center; justify-content: center; width: 41px; height: 24px; margin-top: 6px; border: 1px solid #5f7187; border-radius: 2px; background: linear-gradient(#c0d3e9 50%, #9fb8d3 50%, #b5cce4); box-shadow: inset 0 0 0 1px #d5e3f2; }
.winbtns .close { border-color: #5a1c16; background: linear-gradient(#e09a8c 48%, #b4402c 48%, #cf7360); box-shadow: inset 0 0 0 1px #e7b3a9; }
.winbtns svg { width: 20px; height: 16px; }

.client { flex: 1; min-height: 0; display: flex; flex-direction: column; margin: 0 8px; background: #f0f0f0; }
.toolbar { flex: none; display: flex; align-items: flex-start; height: 44px; padding-left: 9px; }
.caption { font-weight: bold; font-size: 14px; line-height: 15px; white-space: nowrap; }
.nav { width: 22px; height: 22px; margin: 15px 8px 0 0; border: 1px solid #2b7f10; border-radius: 2px; background: linear-gradient(135deg, #5cc52e, #169400 55%, #0b7800); }
.nav svg { width: 20px; height: 20px; fill: none; stroke: #fff; stroke-width: 3; }
.plain { margin: 12px 0 0 2px; }
.plain svg { width: 27px; height: 27px; }
.index { width: 130px; padding-left: 28px; margin-top: 18px; }
.find { width: 108px; padding-left: 4px; margin-top: 12px; }
.search { width: 95px; height: 23px; margin: 12px 2px 0 8px; padding: 0 2px; border: 1px solid #e5e5e5; border-bottom: 2px solid #005fb8; background: #ff0; caret-color: #000; font-size: 14px; }
.soft { flex: none; display: flex; align-items: center; justify-content: center; background: #fdfdfd; border: 1px solid #d0d0d0; border-radius: 4px; font-size: 13px; }
.go { width: 63px; height: 32px; margin-top: 10px; gap: 4px; border-color: #0078d4; }
.stack { display: flex; flex-direction: column; }
.stack .caption { line-height: 14px; margin-bottom: 1px; }
.stack .box, .stack .combo { height: 22px; }
.no { width: 109px; margin-left: 3px; }
.rate { width: 116px; margin-left: 4px; }
.square { width: 30px; height: 26px; margin: 15px 0 0 5px; }
.kur { width: 86px; margin-left: 6px; }
.corner { display: flex; gap: 5px; margin-left: auto; }
.corner button { width: 33px; height: 33px; border: 1px solid #000; }
.corner svg { width: 31px; height: 31px; }

.page { flex: 1; min-height: 0; display: flex; flex-direction: column; border-top: 3px solid #8a8a8a; border-left: 2px solid #808080; }
.tabrow { flex: none; display: flex; align-items: flex-start; height: 28px; padding: 1px 0 0 1px; }
.tabs { display: flex; width: 391px; height: 27px; background: #fafafa; }
.tab { width: 96px; height: 23px; margin-top: 1px; background: #f3f3f3; border: 1px solid #e5e5e5; white-space: nowrap; }
.tab.on { width: 99px; height: 23px; margin-top: 0; padding-left: 26px; background: #fafafa; border-color: #fafafa; }
.copy { width: 86px; height: 24px; gap: 1px; }
.note { width: 53px; height: 25px; margin-left: 3px; }
.grn { width: 86px; height: 25px; margin-left: 2px; gap: 6px; }
.combo.ghost { width: 115px; height: 23px; margin-left: 6px; border-color: #ececec; background: #f6f6f6; }
.ghost svg { width: 10px; height: 6px; }
.sign { width: 67px; height: 26px; margin-left: 2px; background: #ff0; color: #008000; font: bold 15px "Open Sans", sans-serif; }
.screen { width: 29px; height: 27px; }
.bar { width: 1px; height: 26px; margin: 1px 12px 0 11px; background: #777; }
.tescil { display: flex; align-items: center; gap: 4px; height: 26px; margin-left: 9px; font-size: 11px; }
.tescil input { appearance: none; width: 16px; height: 16px; border: 1px solid #5f5f5f; border-radius: 3px; background: #f6f6f6; }
.birlik { height: 17px; margin: 4px 0 0 21px; padding: 0 2px; background: #008080; color: #ff0; font-size: 12px; line-height: 14px; }
.files { display: flex; gap: 2px; margin-left: 19px; }
.files .soft { width: 27px; height: 26px; }
.pay { position: relative; z-index: 2; }
.files .active { background: #e0eef9; border-color: #0078d4; }
.mark { position: absolute; border: 3px solid #f00; pointer-events: none; }
.mark-button { left: -2px; top: -3px; width: 41px; height: 44px; }
.mark-tip { left: 9px; top: 37px; width: 199px; height: 37px; }
.tip { position: absolute; left: 16px; top: 40px; height: 25px; padding: 0 3px; border: 1px solid #767676; background: #f9f9f9; box-shadow: 3px 3px 2px #777; font: 14px/22px "Open Sans", "Segoe UI", sans-serif; white-space: nowrap; }
.cursor { position: absolute; left: 15px; top: 20px; width: 16px; height: 24px; }

.form { flex: none; display: flex; align-items: flex-start; height: 493px; margin-left: 4px; }
.left { flex: none; width: 376px; }
.middle { flex: none; width: 359px; }
.right { flex: 1; }
.row { display: flex; align-items: flex-start; height: 29px; font-size: 11px; }
.row.short { height: 28px; }
.lbl { flex: none; padding-right: 3px; line-height: 23px; text-align: right; white-space: nowrap; }
.left .lbl { width: 89px; }
.middle .lbl { width: 94px; padding-right: 4px; }
.right .lbl { width: 91px; padding-right: 2px; }
.lbl.large { font-size: 13px; }
.left .inset, .middle .inset { padding-right: 10px; }
.sub { flex: none; padding-left: 2px; line-height: 23px; white-space: nowrap; }
.box { flex: none; min-width: 0; height: 19px; padding: 0 2px; border: 1px solid #a0a0a0; background: #fff; }
.box.tall { height: 25px; z-index: 1; }
.box.off, .combo.off { background: #f0f0f0; }
.box.filled { height: 22px; background: #808080; }
.box.silver { height: 22px; background: #c0c0c0; }
.combo { flex: none; display: grid; grid-template-columns: 1fr 21px; align-items: center; justify-items: center; height: 19px; padding: 1px; border: 1px solid #a0a0a0; background: #fff; }
.combo select { grid-area: 1 / 1 / 2 / 3; width: 100%; height: 100%; appearance: none; border: 0; background: none; }
.combo i, .combo svg { grid-area: 1 / 2; pointer-events: none; }
.combo i { display: flex; align-items: center; justify-content: center; width: 21px; height: 100%; background: #f0f0f0; }
.combo i::after { content: ""; border: 4px solid transparent; border-top-color: #000; border-bottom: 0; }
.lookup { flex: none; display: flex; align-items: center; height: 26px; padding-right: 3px; border: 1px solid #a0a0a0; background: #fff; }
.lookup input { flex: 1; min-width: 0; height: 100%; border: 0; background: none; }
.lookup svg { width: 20px; height: 20px; }
.lookup.off { background: #f0f0f0; }
.lookup.off svg { width: 24px; height: 20px; }
.small { height: 26px; font-size: 11px; }

.memo { display: flex; width: 364px; height: 92px; margin: 3px 0 2px 1px; border: 1px solid #a0a0a0; background: #fff; }
.memo textarea { flex: 1; border: 0; resize: none; background: none; font-size: 13px; }
.scroll { display: flex; flex-direction: column; justify-content: space-between; width: 22px; background: #f8f8f8; }
.scroll button { display: flex; align-items: center; justify-content: center; height: 21px; border: 1px solid #a0a0a0; background: #f0f0f0; }
.scroll svg { width: 12px; height: 6px; }
.left .info { height: 28px; }
.left .info .lbl { width: 142px; padding-right: 22px; line-height: 34px; }
.info .box.filled { height: 19px; }
.wide { width: 223px; }
.credit { margin: 4px 0 0 113px; color: #f00; font-weight: bold; font-size: 14px; line-height: 16px; }
.flags { display: grid; grid-template-columns: 81px 88px 83px auto; justify-content: start; align-content: start; gap: 7px 0; height: 58px; padding: 11px 0 0 8px; font-size: 11px; }
.flags label { display: flex; align-items: center; gap: 5px; height: 16px; white-space: nowrap; }
.flags label:nth-child(3), .flags label:nth-child(5) { grid-column-end: span 2; }
.flags input { appearance: none; width: 16px; height: 16px; border: 1px solid #a0a0a0; background: #fff; }
.extra { display: block; width: 188px; margin-left: 4px; }

.hsplit { flex: none; display: flex; justify-content: center; height: 11px; background: #fafafa; }
.hsplit button { display: flex; justify-content: center; align-items: center; width: 30%; height: 11px; border: 1px solid #8f9aa0; border-radius: 2px; background: linear-gradient(#fff 50%, transparent 50%), linear-gradient(90deg, #c9e6f5, #86a2b4); }
.hsplit svg { width: 10px; height: 6px; }
.detail { flex: 1; min-height: 0; display: flex; flex-direction: column; padding: 3px 6px 0 5px; background: #fff; }
.dtabs { flex: none; display: flex; height: 25px; padding-left: 4px; border-bottom: 1px solid #000; }
.dtab { padding: 0 7px; height: 25px; }
.dtab.on { padding: 0 8px; border: 1px solid #000; border-bottom: 0; background: #f0f0f0; }
.sheet { flex: 1; margin-top: 2px; border: 1px solid #a0a0a0; border-bottom: 0; }
table { width: 100%; table-layout: fixed; border-collapse: collapse; }
th { height: 23px; padding: 0 2px; border: 1px solid #000; background: #f0f0f0; font-weight: normal; text-align: left; white-space: nowrap; }
</style>
